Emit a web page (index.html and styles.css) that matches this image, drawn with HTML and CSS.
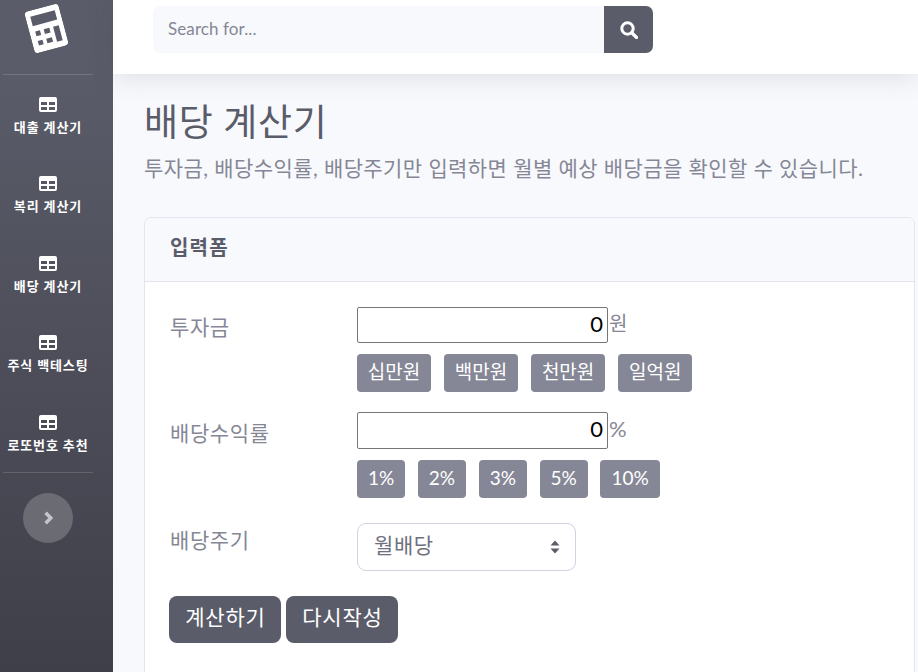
FILE: index.html
```html
<!DOCTYPE html>
<html lang="ko">
<head>
<meta charset="utf-8">
<title>배당 계산기</title>
<link rel="stylesheet" href="styles.css">
</head>
<body>
<div class="app">
  <aside class="sidebar">
    <div class="brand">
      <svg class="logo" viewBox="0 0 36 44" width="35" height="43"><path fill="#fff" fill-rule="evenodd" d="M4 0h28a4 4 0 0 1 4 4v36a4 4 0 0 1-4 4H4a4 4 0 0 1-4-4V4a4 4 0 0 1 4-4zM5 6v10h26V6zM6 22v5h5v-5zM15 22v5h6v-5zM25 22v16h6V22zM6 32v5h5v-5zM15 32v5h6v-5z"/></svg>
    </div>
    <hr class="divider">
    <nav class="nav">
      <a class="nav-item"><svg class="table-icon" viewBox="0 0 18 15"><path fill="#fff" fill-rule="evenodd" d="M2 0h14a2 2 0 0 1 2 2v11a2 2 0 0 1-2 2H2a2 2 0 0 1-2-2V2a2 2 0 0 1 2-2zM2 5v3h6V5zM10 5v3h6V5zM2 10v3h6v-3zM10 10v3h6v-3z"/></svg><span>대출 계산기</span></a>
      <a class="nav-item"><svg class="table-icon" viewBox="0 0 18 15"><path fill="#fff" fill-rule="evenodd" d="M2 0h14a2 2 0 0 1 2 2v11a2 2 0 0 1-2 2H2a2 2 0 0 1-2-2V2a2 2 0 0 1 2-2zM2 5v3h6V5zM10 5v3h6V5zM2 10v3h6v-3zM10 10v3h6v-3z"/></svg><span>복리 계산기</span></a>
      <a class="nav-item"><svg class="table-icon" viewBox="0 0 18 15"><path fill="#fff" fill-rule="evenodd" d="M2 0h14a2 2 0 0 1 2 2v11a2 2 0 0 1-2 2H2a2 2 0 0 1-2-2V2a2 2 0 0 1 2-2zM2 5v3h6V5zM10 5v3h6V5zM2 10v3h6v-3zM10 10v3h6v-3z"/></svg><span>배당 계산기</span></a>
      <a class="nav-item"><svg class="table-icon" viewBox="0 0 18 15"><path fill="#fff" fill-rule="evenodd" d="M2 0h14a2 2 0 0 1 2 2v11a2 2 0 0 1-2 2H2a2 2 0 0 1-2-2V2a2 2 0 0 1 2-2zM2 5v3h6V5zM10 5v3h6V5zM2 10v3h6v-3zM10 10v3h6v-3z"/></svg><span>주식 백테스팅</span></a>
      <a class="nav-item"><svg class="table-icon" viewBox="0 0 18 15"><path fill="#fff" fill-rule="evenodd" d="M2 0h14a2 2 0 0 1 2 2v11a2 2 0 0 1-2 2H2a2 2 0 0 1-2-2V2a2 2 0 0 1 2-2zM2 5v3h6V5zM10 5v3h6V5zM2 10v3h6v-3zM10 10v3h6v-3z"/></svg><span>로또번호 추천</span></a>
    </nav>
    <hr class="divider">
    <button class="toggle" type="button" aria-label="toggle"><svg viewBox="0 0 10 14" width="10" height="14"><path d="M2.6 1.8l5.2 5.2-5.2 5.2" fill="none" stroke="#c4c5cb" stroke-width="3.6"/></svg></button>
  </aside>
  <div class="main">
    <header class="topbar">
      <form class="search">
        <div class="search-input">Search for...</div>
        <button class="search-btn" type="button" aria-label="search"><svg viewBox="0 0 18 18" width="18" height="18"><circle cx="7.5" cy="7.5" r="5.7" fill="none" stroke="#fff" stroke-width="3"/><path d="M12 12l4.5 4.5" stroke="#fff" stroke-width="3.2" stroke-linecap="round"/></svg></button>
      </form>
    </header>
    <main class="content">
      <h1 class="title">배당 계산기</h1>
      <p class="subtitle">투자금, 배당수익률, 배당주기만 입력하면 월별 예상 배당금을 확인할 수 있습니다.</p>
      <section class="card">
        <div class="card-header">입력폼</div>
        <div class="card-body">
          <div class="row row-invest">
            <label class="label">투자금</label>
            <div class="field">
              <div class="input-line"><div class="num-input">0</div><span class="unit">원</span></div>
              <div class="chips"><span class="chip">십만원</span><span class="chip">백만원</span><span class="chip">천만원</span><span class="chip">일억원</span></div>
            </div>
          </div>
          <div class="row row-yield">
            <label class="label">배당수익률</label>
            <div class="field">
              <div class="input-line"><div class="num-input">0</div><span class="unit unit-pct">%</span></div>
              <div class="chips chips-pct"><span class="chip">1%</span><span class="chip">2%</span><span class="chip">3%</span><span class="chip">5%</span><span class="chip">10%</span></div>
            </div>
          </div>
          <div class="row row-cycle">
            <label class="label">배당주기</label>
            <div class="field">
              <div class="select"><span>월배당</span><svg viewBox="0 0 10 14" width="10" height="14"><path fill="#5a5c69" d="M5 0.5L9.5 5.5H0.5zM5 13.5L0.5 8.5H9.5z"/></svg></div>
            </div>
          </div>
          <div class="actions"><button class="btn" type="button">계산하기</button><button class="btn" type="button">다시작성</button></div>
        </div>
      </section>
    </main>
  </div>
</div>
</body>
</html>
```
FILE: styles.css
```css
* { box-sizing: border-box; }
html, body { margin: 0; height: 100%; overflow: hidden; }
body { font-family: "Lato", "Noto Sans CJK KR", sans-serif; color: #858796; background: #f8f9fc; }
.app { display: flex; height: 672px; }

.sidebar { width: 113px; flex: none; padding-right: 17px; display: flex; flex-direction: column; align-items: center; background: linear-gradient(180deg, #5a5c69 10%, #3f3f49 100%); }
.brand { height: 74px; width: 96px; display: flex; justify-content: center; padding: 7px 3px 0 0; }
.logo { transform: rotate(-15deg); }
.divider { width: 90px; margin: 0; border: 0; border-top: 1px solid rgba(255,255,255,.15); }
.nav { width: 96px; display: flex; flex-direction: column; }
.nav-item { height: 79.4px; display: flex; flex-direction: column; align-items: center; padding-top: 22px; color: #fff; font-size: 13px; font-weight: 700; letter-spacing: .9px; line-height: 17px; white-space: nowrap; }
.table-icon { width: 18px; height: 15px; margin-bottom: 7px; }
.toggle { width: 50px; height: 50px; margin-top: 20px; border: 0; border-radius: 50%; padding: 0; background: rgba(255,255,255,.2); display: flex; align-items: center; justify-content: center; }

.main { flex: 1; min-width: 0; display: flex; flex-direction: column; }
.topbar { height: 74px; flex: none; padding: 6px 0 0 40px; background: #fff; box-shadow: 0 2px 28px rgba(58,59,69,.15); position: relative; }
.search { display: flex; width: 500px; height: 47px; }
.search-input { flex: 1; padding-left: 15px; background: #f8f9fc; border-radius: 7px 0 0 7px; font-size: 17px; letter-spacing: .1px; line-height: 46px; color: #858796; }
.search-btn { width: 49px; border: 0; padding: 0; background: #5a5c69; border-radius: 0 7px 7px 0; display: flex; align-items: center; justify-content: center; }

.content { flex: 1; padding: 0 3px 0 31px; }
.title { margin: 22px 0 0; font-size: 37px; font-weight: 400; letter-spacing: .6px; line-height: 52px; color: #5a5c69; }
.subtitle { margin: 5px 0 0; font-size: 21px; letter-spacing: .42px; line-height: 30px; color: #858796; white-space: nowrap; }
.card { margin-top: 34px; background: #fff; border: 1px solid #e3e6f0; border-radius: 7px 7px 0 0; height: 480px; }
.card-header { height: 64px; padding-left: 25px; background: #f8f9fc; border-bottom: 1px solid #e3e6f0; border-radius: 7px 7px 0 0; font-size: 20px; font-weight: 700; letter-spacing: 1.2px; line-height: 58px; color: #5a5c69; }
.card-body { padding: 25px 0 0 25px; }
.row { display: flex; }
.row-invest { height: 105px; }
.row-yield { height: 111px; }
.row-cycle { height: 73px; }
.label { width: 187px; flex: none; font-size: 21px; letter-spacing: .6px; line-height: 40px; color: #858796; }
.row-yield .label { line-height: 42px; }
.row-cycle .label { line-height: 34px; }
.field { display: flex; flex-direction: column; }
.input-line { display: flex; align-items: center; }
.num-input { width: 251px; height: 37px; padding-right: 4px; border: 1px solid #767676; border-radius: 2px; background: #fff; text-align: right; font-size: 22px; line-height: 31px; color: #000; }
.row-invest .num-input { height: 36px; }
.unit { margin: -5px 0 0 1px; font-size: 20px; color: #858796; }
.unit-pct { margin-top: -5px; font-size: 22px; }
.chips { display: flex; gap: 13px; margin-top: 11px; }
.chip { height: 38px; padding: 0 10.8px; border-radius: 4px; background: #858796; color: #fff; font-size: 19px; line-height: 36px; }
.chips-pct { gap: 12.6px; }
.chips-pct .chip { padding: 0 11px; font-size: 19px; }
.select { width: 219px; height: 48px; display: flex; align-items: center; justify-content: space-between; padding: 0 15px 0 16px; border: 1px solid #d1d3e2; border-radius: 9px; font-size: 21px; letter-spacing: .6px; color: #6e707e; }
.select span { margin-top: -6px; }
.actions { display: flex; gap: 5px; margin-left: -1px; }
.btn { width: 112px; height: 47px; border: 0; border-radius: 8px; background: #5a5c69; color: #fff; font-family: inherit; font-size: 21px; letter-spacing: .8px; line-height: 40px; padding: 0 0 6px 1px; }
```
